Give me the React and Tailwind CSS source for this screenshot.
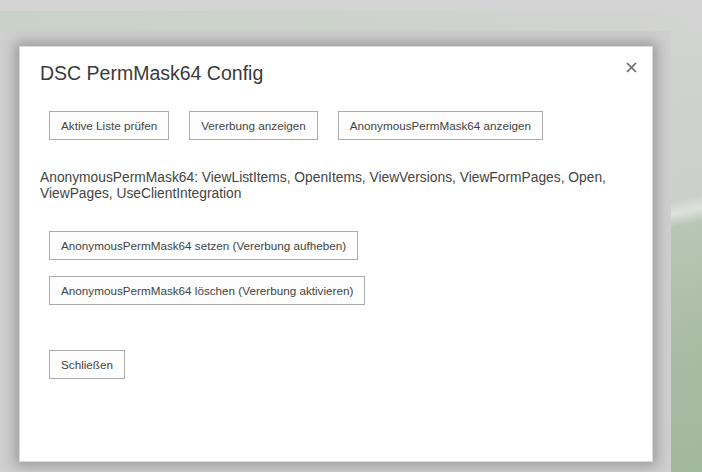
export default function App() {
  const font = { fontFamily: '"Liberation Sans", Arial, sans-serif' }
  return (
    <div className="w-[702px] h-[472px] overflow-hidden bg-[#d2d3d2] flex flex-col" style={font}>
      <div className="h-[11px] bg-[#d3d4d3]" />
      <div className="h-[20px] bg-gradient-to-r from-[#c9d2c8] via-[#cdd3cc] to-[#d3d4d3]" />
      <div className="flex-1 flex">
        <div className="w-[671px] bg-[#cecfce] pl-[19px] pt-[15px]">
          <div className="relative w-[634px] h-[416px] bg-white border border-[#dadada] shadow-[0_0_12px_4px_rgba(0,0,0,0.25)] pl-[20px] pt-[13px] text-[#444]">
            <button className="absolute right-[15px] top-[15px] w-[11px] h-[11px] flex items-center justify-center">
              <svg width="11" height="11" viewBox="0 0 11 11">
                <path d="M1 1L10 10M10 1L1 10" stroke="#6a6a6a" strokeWidth="1.7" />
              </svg>
            </button>
            <h1 className="text-[19.5px] leading-[26px] text-[#3a3a3a]">DSC PermMask64 Config</h1>
            <div className="flex gap-[20px] mt-[25px] ml-[9px]">
              <Btn>Aktive Liste prüfen</Btn>
              <Btn>Vererbung anzeigen</Btn>
              <Btn>AnonymousPermMask64 anzeigen</Btn>
            </div>
            <p className="mt-[30px] text-[13.8px] leading-[16px] text-[#444] w-[590px]">
              AnonymousPermMask64: ViewListItems, OpenItems, ViewVersions, ViewFormPages, Open, ViewPages, UseClientIntegration
            </p>
            <div className="flex flex-col items-start gap-[16px] mt-[29px] ml-[9px]">
              <Btn>AnonymousPermMask64 setzen (Vererbung aufheben)</Btn>
              <Btn>AnonymousPermMask64 löschen (Vererbung aktivieren)</Btn>
            </div>
            <div className="mt-[45px] ml-[9px]">
              <Btn>Schließen</Btn>
            </div>
          </div>
        </div>
        <div className="w-[31px] bg-[linear-gradient(168deg,#d1d3d0_0%,#cbd0ca_38%,#dde2dc_41%,#b8c7b4_44%,#a9bca4_70%,#a2b89c_100%)]" />
      </div>
    </div>
  )
}

function Btn({ children }) {
  return (
    <button className="h-[29px] px-[11px] border border-[#ababab] bg-[#fdfdfd] text-[11.7px] text-[#444] whitespace-nowrap">
      {children}
    </button>
  )
}
